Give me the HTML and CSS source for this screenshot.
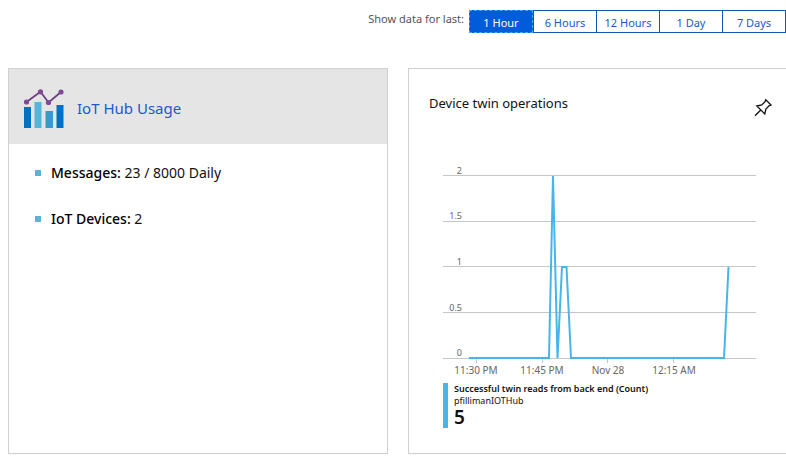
FILE: index.html
```html
<!DOCTYPE html>
<html lang="en">
<head>
<meta charset="utf-8">
<title>IoT Hub overview</title>
<link rel="stylesheet" href="styles.css">
</head>
<body>
<div class="toolbar">
  <span class="toolbar-label" id="range-label">Show data for last:</span>
  <div class="range" role="group" aria-labelledby="range-label">
    <button type="button" class="range-button selected" aria-pressed="true">1 Hour</button>
    <button type="button" class="range-button">6 Hours</button>
    <button type="button" class="range-button">12 Hours</button>
    <button type="button" class="range-button">1 Day</button>
    <button type="button" class="range-button">7 Days</button>
  </div>
</div>
<main class="tiles">
  <section class="tile">
    <header class="usage-header">
      <svg class="usage-icon" width="40" height="40" viewBox="0 0 40 40" aria-hidden="true">
        <rect x="0" y="19" width="7" height="21" fill="#0072c6"/>
        <rect x="10.500" y="14" width="7" height="26" fill="#59b4d9"/>
        <rect x="21.500" y="23" width="7.500" height="17" fill="#3999c6"/>
        <rect x="32.500" y="17" width="7" height="23" fill="#0072c6"/>
        <path d="M2.500 14L16.500 3.800L24.500 14.500L37 4" fill="none" stroke="#68407f" stroke-width="1.700"/>
        <g fill="#804998">
          <circle cx="2.500" cy="14" r="2.600"/>
          <circle cx="16.500" cy="3.800" r="2.600"/>
          <circle cx="24.500" cy="14.500" r="2.600"/>
          <circle cx="37" cy="4" r="2.600"/>
        </g>
      </svg>
      <a class="usage-link" href="#usage">IoT Hub Usage</a>
    </header>
    <ul class="usage-list">
      <li><span><span class="usage-name">Messages:</span> 23 / 8000 Daily</span></li>
      <li><span><span class="usage-name">IoT Devices:</span> 2</span></li>
    </ul>
  </section>
  <section class="tile chart-tile">
    <header class="chart-header">
      <h2 class="chart-title">Device twin operations</h2>
      <button type="button" class="pin" aria-label="Pin to dashboard">
        <svg width="20" height="20" viewBox="0 0 20 20" aria-hidden="true">
          <path d="M12.800 1.800L18 7L16.300 7.600L12.900 11L11.800 16L3.800 8L8.800 6.900L12.200 3.500ZM7.800 12L2 17.800" fill="none" stroke="#111" stroke-width="1.300"/>
        </svg>
      </button>
    </header>
    <svg class="chart" viewBox="0 0 313 220" role="img" aria-label="Twin operations over the last hour">
      <path class="grid-line" d="M0 15.500H313M0 61.500H313M0 106.500H313M0 152.500H313M0 198.500H313"/>
      <path class="tick" d="M33.500 199V203M99.500 199V203M164.500 199V203M230.500 199V203"/>
      <g class="axis axis-y">
        <text x="19" y="14">2</text>
        <text x="19" y="59">1.5</text>
        <text x="19" y="105">1</text>
        <text x="19" y="151">0.5</text>
        <text x="19" y="196">0</text>
      </g>
      <g class="axis axis-x">
        <text x="33" y="214">11:30 PM</text>
        <text x="99" y="214">11:45 PM</text>
        <text x="165" y="214">Nov 28</text>
        <text x="231" y="214">12:15 AM</text>
      </g>
      <path class="series" d="M26 198H106L110 16L114.500 198L119 107H123.500L128 198H281L285.500 107"/>
    </svg>
    <div class="legend">
      <div class="legend-name">Successful twin reads from back end (Count)</div>
      <div class="legend-source">pfillimanIOTHub</div>
      <div class="legend-value">5</div>
    </div>
  </section>
</main>
</body>
</html>
```

FILE: styles.css
```css
* {
  box-sizing: border-box;
}

body {
  margin: 0;
  overflow-x: hidden;
  background: #fff;
  color: #111;
  font-family: "Noto Sans", "Open Sans", sans-serif;
}

.toolbar {
  display: flex;
  justify-content: flex-end;
  gap: 5px;
  padding-top: 10px;
}

.toolbar-label {
  color: #555;
  font-size: 11px;
  line-height: 18px;
}

.range {
  display: grid;
  grid-template-columns: repeat(5, 1fr);
  width: 317px;
  border: 1px solid #1257b0;
}

.range-button {
  height: 21px;
  padding: 2px 0 0;
  border: 0;
  border-left: 1px solid #1257b0;
  background: #fff;
  color: #2257cf;
  font: inherit;
  font-size: 11px;
  line-height: 18px;
}

.range-button.selected {
  height: 23px;
  margin: -1px 0 -1px -1px;
  border: 1px dashed #4da3f0;
  background: #015cda;
  color: #fff;
}

.tiles {
  display: grid;
  grid-template-columns: 1fr 1fr;
  gap: 20px;
  margin: 35px -2px 0 8px;
}

.tile {
  min-height: 386px;
  border: 1px solid #d0d0d0;
}

.usage-header {
  display: flex;
  align-items: center;
  gap: 13px;
  height: 75px;
  padding: 2px 15px 0;
  background: #e5e5e5;
}

.usage-link {
  color: #2257cf;
  font-size: 15px;
  text-decoration: none;
}

.usage-list {
  display: grid;
  gap: 22px;
  margin: 0;
  padding: 17px 26px;
  list-style: none;
  font-size: 14px;
  line-height: 24px;
}

.usage-list li {
  display: flex;
  align-items: center;
  gap: 10px;
}

.usage-list li::before {
  width: 6px;
  height: 6px;
  background: #59b4d9;
  content: "";
}

.usage-name {
  color: #000;
  font-weight: 500;
}

.chart-tile {
  padding: 24px 31px 24px 34px;
}

.chart-header {
  display: flex;
  justify-content: space-between;
  margin: 0 -17px 0 -14px;
}

.chart-title {
  margin: 0;
  font-size: 13px;
  font-weight: 400;
  line-height: 20px;
}

.pin {
  width: 20px;
  height: 20px;
  margin-top: 5px;
  padding: 0;
  border: 0;
  background: none;
}

.chart {
  display: block;
  width: 100%;
  margin-top: 42px;
}

.grid-line,
.tick {
  fill: none;
  stroke: #c4c6c8;
}

.axis {
  fill: #666;
  font-size: 9px;
}

.axis-y {
  text-anchor: end;
}

.axis-x {
  font-size: 10px;
  text-anchor: middle;
}

.series {
  fill: none;
  stroke: #47b5ea;
  stroke-width: 2;
}

.legend {
  margin-top: 3px;
  padding-left: 6px;
  border-left: 5px solid #47b5ea;
  font-size: 9px;
  line-height: 12px;
}

.legend-name {
  font-weight: 600;
}

.legend-value {
  font-size: 19px;
  font-weight: 600;
  line-height: 21px;
}
```
